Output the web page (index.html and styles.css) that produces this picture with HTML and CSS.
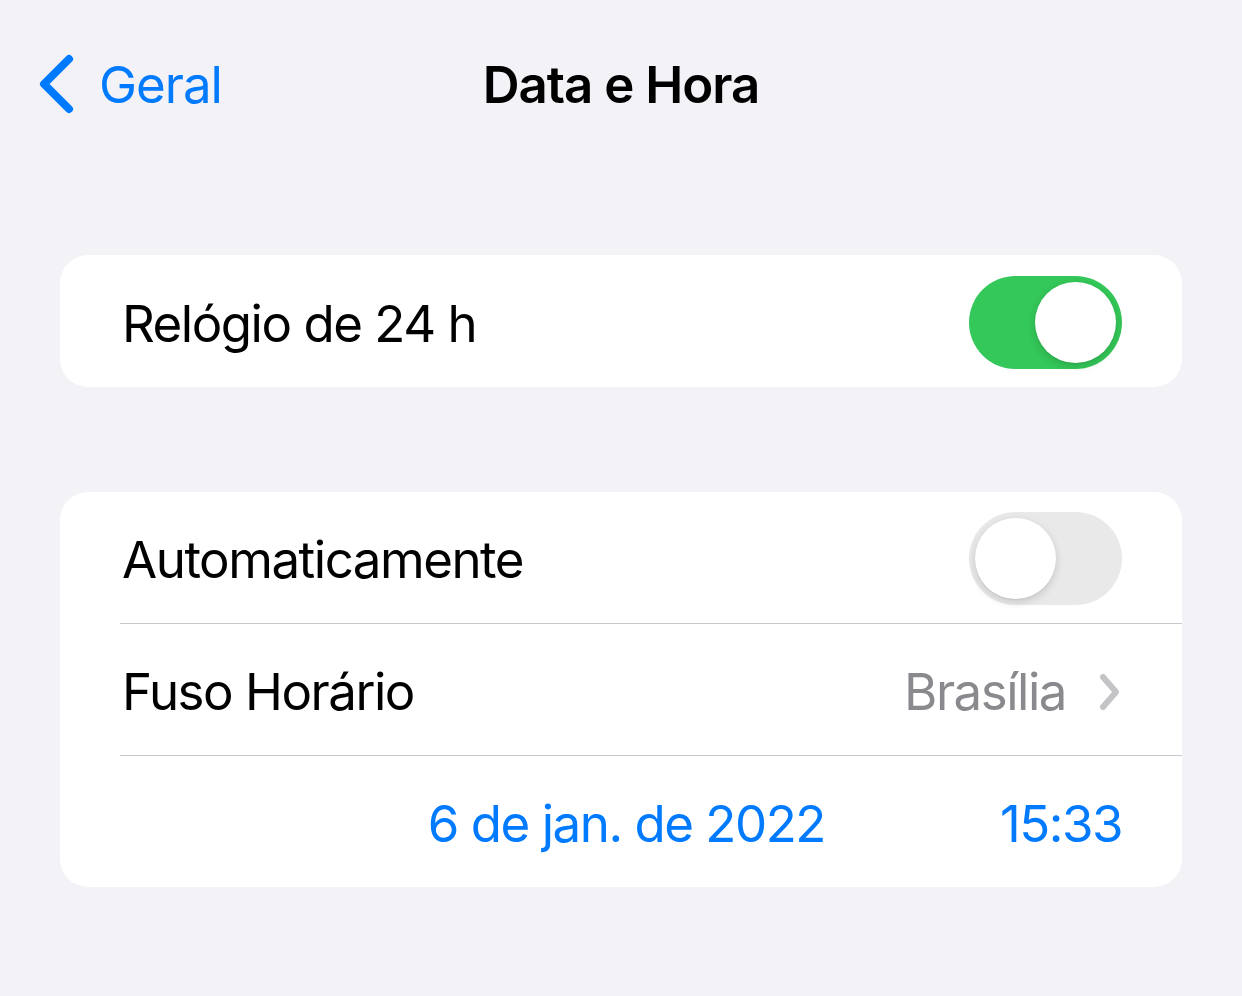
FILE: index.html
```html
<!DOCTYPE html>
<html lang="pt-BR">
<head>
  <meta charset="UTF-8">
  <title>Data e Hora</title>
  <link rel="stylesheet" href="styles.css">
</head>
<body>
  <header class="nav-bar">
    <a class="back-link" href="#">
      <svg class="back-chevron" viewBox="0 0 40 60" width="40" height="60">
        <path d="M33 5 L8 30 L33 55" />
      </svg>
      <span>Geral</span>
    </a>
    <h1 class="nav-title">Data e Hora</h1>
    <div></div>
  </header>

  <main class="content">
    <section class="group">
      <div class="row">
        <span class="row-label">Relógio de 24 h</span>
        <div class="switch on"><div class="knob"></div></div>
      </div>
    </section>

    <section class="group">
      <div class="row">
        <span class="row-label">Automaticamente</span>
        <div class="switch"><div class="knob"></div></div>
      </div>
      <div class="row">
        <span class="row-label">Fuso Horário</span>
        <span class="row-detail">
          Brasília
          <svg class="disclosure" viewBox="0 0 24 40" width="24" height="40">
            <path d="M5 5 L18 20 L5 35" />
          </svg>
        </span>
      </div>
      <div class="row date-row">
        <span class="date-value">6 de jan. de 2022</span>
        <span class="date-value">15:33</span>
      </div>
    </section>
  </main>
</body>
</html>
```

FILE: styles.css
```css
body {
  margin: 0;
  background: #f2f2f7;
  font-family: "Inter", "Liberation Sans", sans-serif;
  color: #000;
  font-size: 51px;
  letter-spacing: -0.029em;
}

.nav-bar {
  display: grid;
  grid-template-columns: 1fr auto 1fr;
  align-items: center;
  height: 168px;
}

.back-link {
  display: flex;
  align-items: center;
  gap: 23px;
  padding-left: 36px;
  color: #007aff;
  text-decoration: none;
  letter-spacing: -0.02em;
}

.back-chevron path {
  fill: none;
  stroke: #007aff;
  stroke-width: 8;
  stroke-linecap: round;
  stroke-linejoin: round;
}

.nav-title {
  margin: 0;
  font-size: 51px;
  font-weight: 600;
  letter-spacing: -0.02em;
}

.content {
  padding: 87px 60px 0;
}

.group {
  background: #fff;
  border-radius: 28px;
  margin-bottom: 105px;
  overflow: hidden;
}

.row {
  display: flex;
  align-items: center;
  justify-content: space-between;
  height: 131px;
  margin-left: 60px;
  padding-right: 60px;
  border-bottom: 1px solid #c8c7cc;
}

.group > .row:only-child {
  height: 132px;
}

.row:last-child {
  border-bottom: none;
}

.row-label,
.row-detail,
.date-value {
  padding-top: 4px;
}

.row-label {
  padding-left: 2px;
}

.switch {
  display: flex;
  align-items: center;
  box-sizing: border-box;
  width: 153px;
  height: 93px;
  margin-top: 2px;
  padding: 6px;
  border-radius: 47px;
  background: #e9e9ea;
}

.switch.on {
  justify-content: flex-end;
  background: #34c759;
}

.knob {
  width: 81px;
  height: 81px;
  border-radius: 50%;
  background: #fff;
  box-shadow: 0 3px 8px rgba(0, 0, 0, 0.15), 0 1px 1px rgba(0, 0, 0, 0.06);
}

.row-detail {
  display: flex;
  align-items: center;
  gap: 32px;
  color: #8a8a8e;
}

.disclosure path {
  fill: none;
  stroke: #c4c4c7;
  stroke-width: 6;
  stroke-linecap: round;
  stroke-linejoin: round;
}

.date-row {
  justify-content: flex-end;
  gap: 175px;
}

.date-value {
  color: #007aff;
}
```
